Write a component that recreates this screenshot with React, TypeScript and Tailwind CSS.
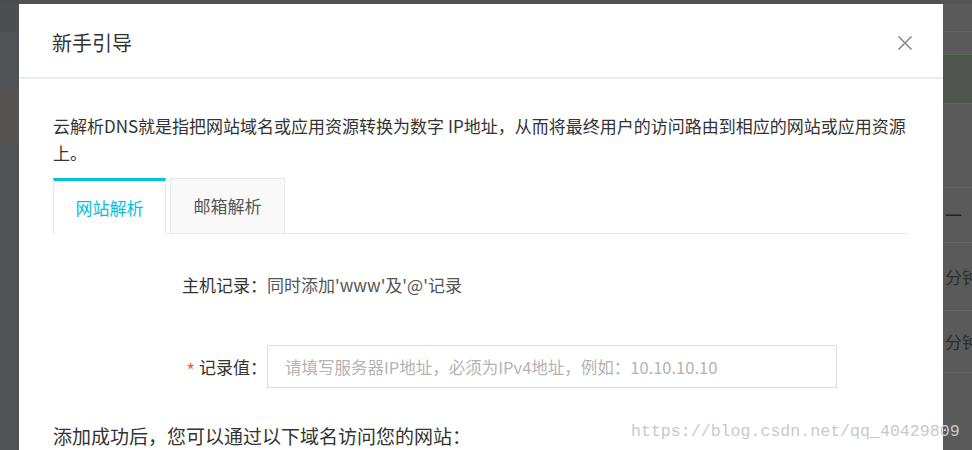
import React from 'react';

const cjk = { fontFamily: '"Noto Sans CJK SC", "Noto Sans", sans-serif' };

const CloseIcon = () => (
  <svg width="16" height="16" viewBox="0 0 16 16" fill="none" stroke="#8a8a8a" strokeWidth="1.6">
    <path d="M1.5 1.5 L14.5 14.5 M14.5 1.5 L1.5 14.5" />
  </svg>
);

const App = () => {
  return (
    <div className="relative flex w-[972px] h-[450px] overflow-hidden bg-[#515254]" style={cjk}>
      {/* Left backdrop strip */}
      <div className="flex flex-col w-[19px] shrink-0">
        <div className="h-[4px] bg-[#4b4c50]" />
        <div className="h-[28px] bg-[#4c4e52]" />
        <div className="h-[56px] bg-[#505255]" />
        <div className="h-[56px] bg-[#545352]" />
        <div className="flex-1 bg-[#515254]" />
      </div>

      {/* Modal */}
      <div className="mt-[4px] w-[924px] shrink-0 bg-white flex flex-col">
        {/* Header */}
        <div className="h-[76px] pt-[4px] flex items-center justify-between pl-[33px] pr-[30px] border-b-2 border-[#e8edf2]">
          <h2 className="text-[20px] text-[#333]">新手引导</h2>
          <button className="p-0"><CloseIcon /></button>
        </div>

        {/* Body */}
        <div className="pl-[34px] pr-[35px] pt-[33px]">
          <p className="text-[17px] leading-[27px] text-[#333]">
            云解析DNS就是指把网站域名或应用资源转换为数字 IP地址，从而将最终用户的访问路由到相应的网站或应用资源上。
          </p>

          {/* Tabs */}
          <div className="mt-[12px] flex items-end border-b border-[#e5e9ee] h-[56px]">
            <div className="w-[113px] h-[56px] -mb-px bg-white border-t-[3px] border-t-[#00c1de] border-x border-x-[#e5e9ee] flex items-center justify-center text-[17px] text-[#00c1de]">
              网站解析
            </div>
            <div className="ml-[4px] w-[115px] h-[55px] bg-[#f9f9f9] border border-[#e5e9ee] border-b-0 flex items-center justify-center text-[17px] text-[#555]">
              邮箱解析
            </div>
          </div>

          {/* Form */}
          <div className="flex items-center h-[26px] mt-[38px]">
            <div className="w-[214px] text-right text-[17px] text-[#333]">主机记录：</div>
            <div className="text-[17px] text-[#555]">同时添加'www'及'@'记录</div>
          </div>

          <div className="flex items-center mt-[47px]">
            <div className="w-[214px] flex justify-end items-center text-[17px] text-[#333]">
              <span className="text-[#f2603f] text-[19px] leading-none mr-[4px] mt-[6px]">*</span>
              <span>记录值：</span>
            </div>
            <input
              className="w-[570px] h-[43px] border border-[#dcdcdc] px-[17px] text-[16.5px] outline-none placeholder:text-[#b3b3b3]"
              placeholder="请填写服务器IP地址，必须为IPv4地址，例如：10.10.10.10"
              style={cjk}
            />
          </div>

          <p className="mt-[34px] text-[19px] text-[#333] leading-[28px]">
            添加成功后，您可以通过以下域名访问您的网站：
          </p>
        </div>
      </div>

      {/* Right backdrop strip */}
      <div className="flex flex-col w-[29px] shrink-0 overflow-hidden bg-[#5a5a5a] text-[#2e2e2e] text-[17px]">
        <div className="h-[4px] bg-[#555]" />
        <div className="h-[28px] border-b border-[#626262]" />
        <div className="h-[22px]" />
        <div className="h-[50px] bg-[#4f554e] border-y border-[#5d6a5a]" />
        <div className="h-[84px] border-b border-[#666]" />
        <div className="h-[54px] flex items-center pl-[2px] text-[#222]">一</div>
        <div className="h-[68px] flex items-center border-t border-[#666] pl-[2px] whitespace-nowrap">分钟</div>
        <div className="h-[62px] flex items-center border-t border-[#666] pl-[2px] whitespace-nowrap">分钟</div>
        <div className="flex-1 border-t border-[#666]" />
      </div>

      {/* Watermark */}
      <div
        className="absolute left-[631px] top-[420px] text-[16.6px] text-[#c9c9c9] whitespace-nowrap"
        style={{ fontFamily: '"Liberation Mono", monospace' }}
      >
        https://blog.csdn.net/qq_40429809
      </div>
    </div>
  );
};

export default App;
